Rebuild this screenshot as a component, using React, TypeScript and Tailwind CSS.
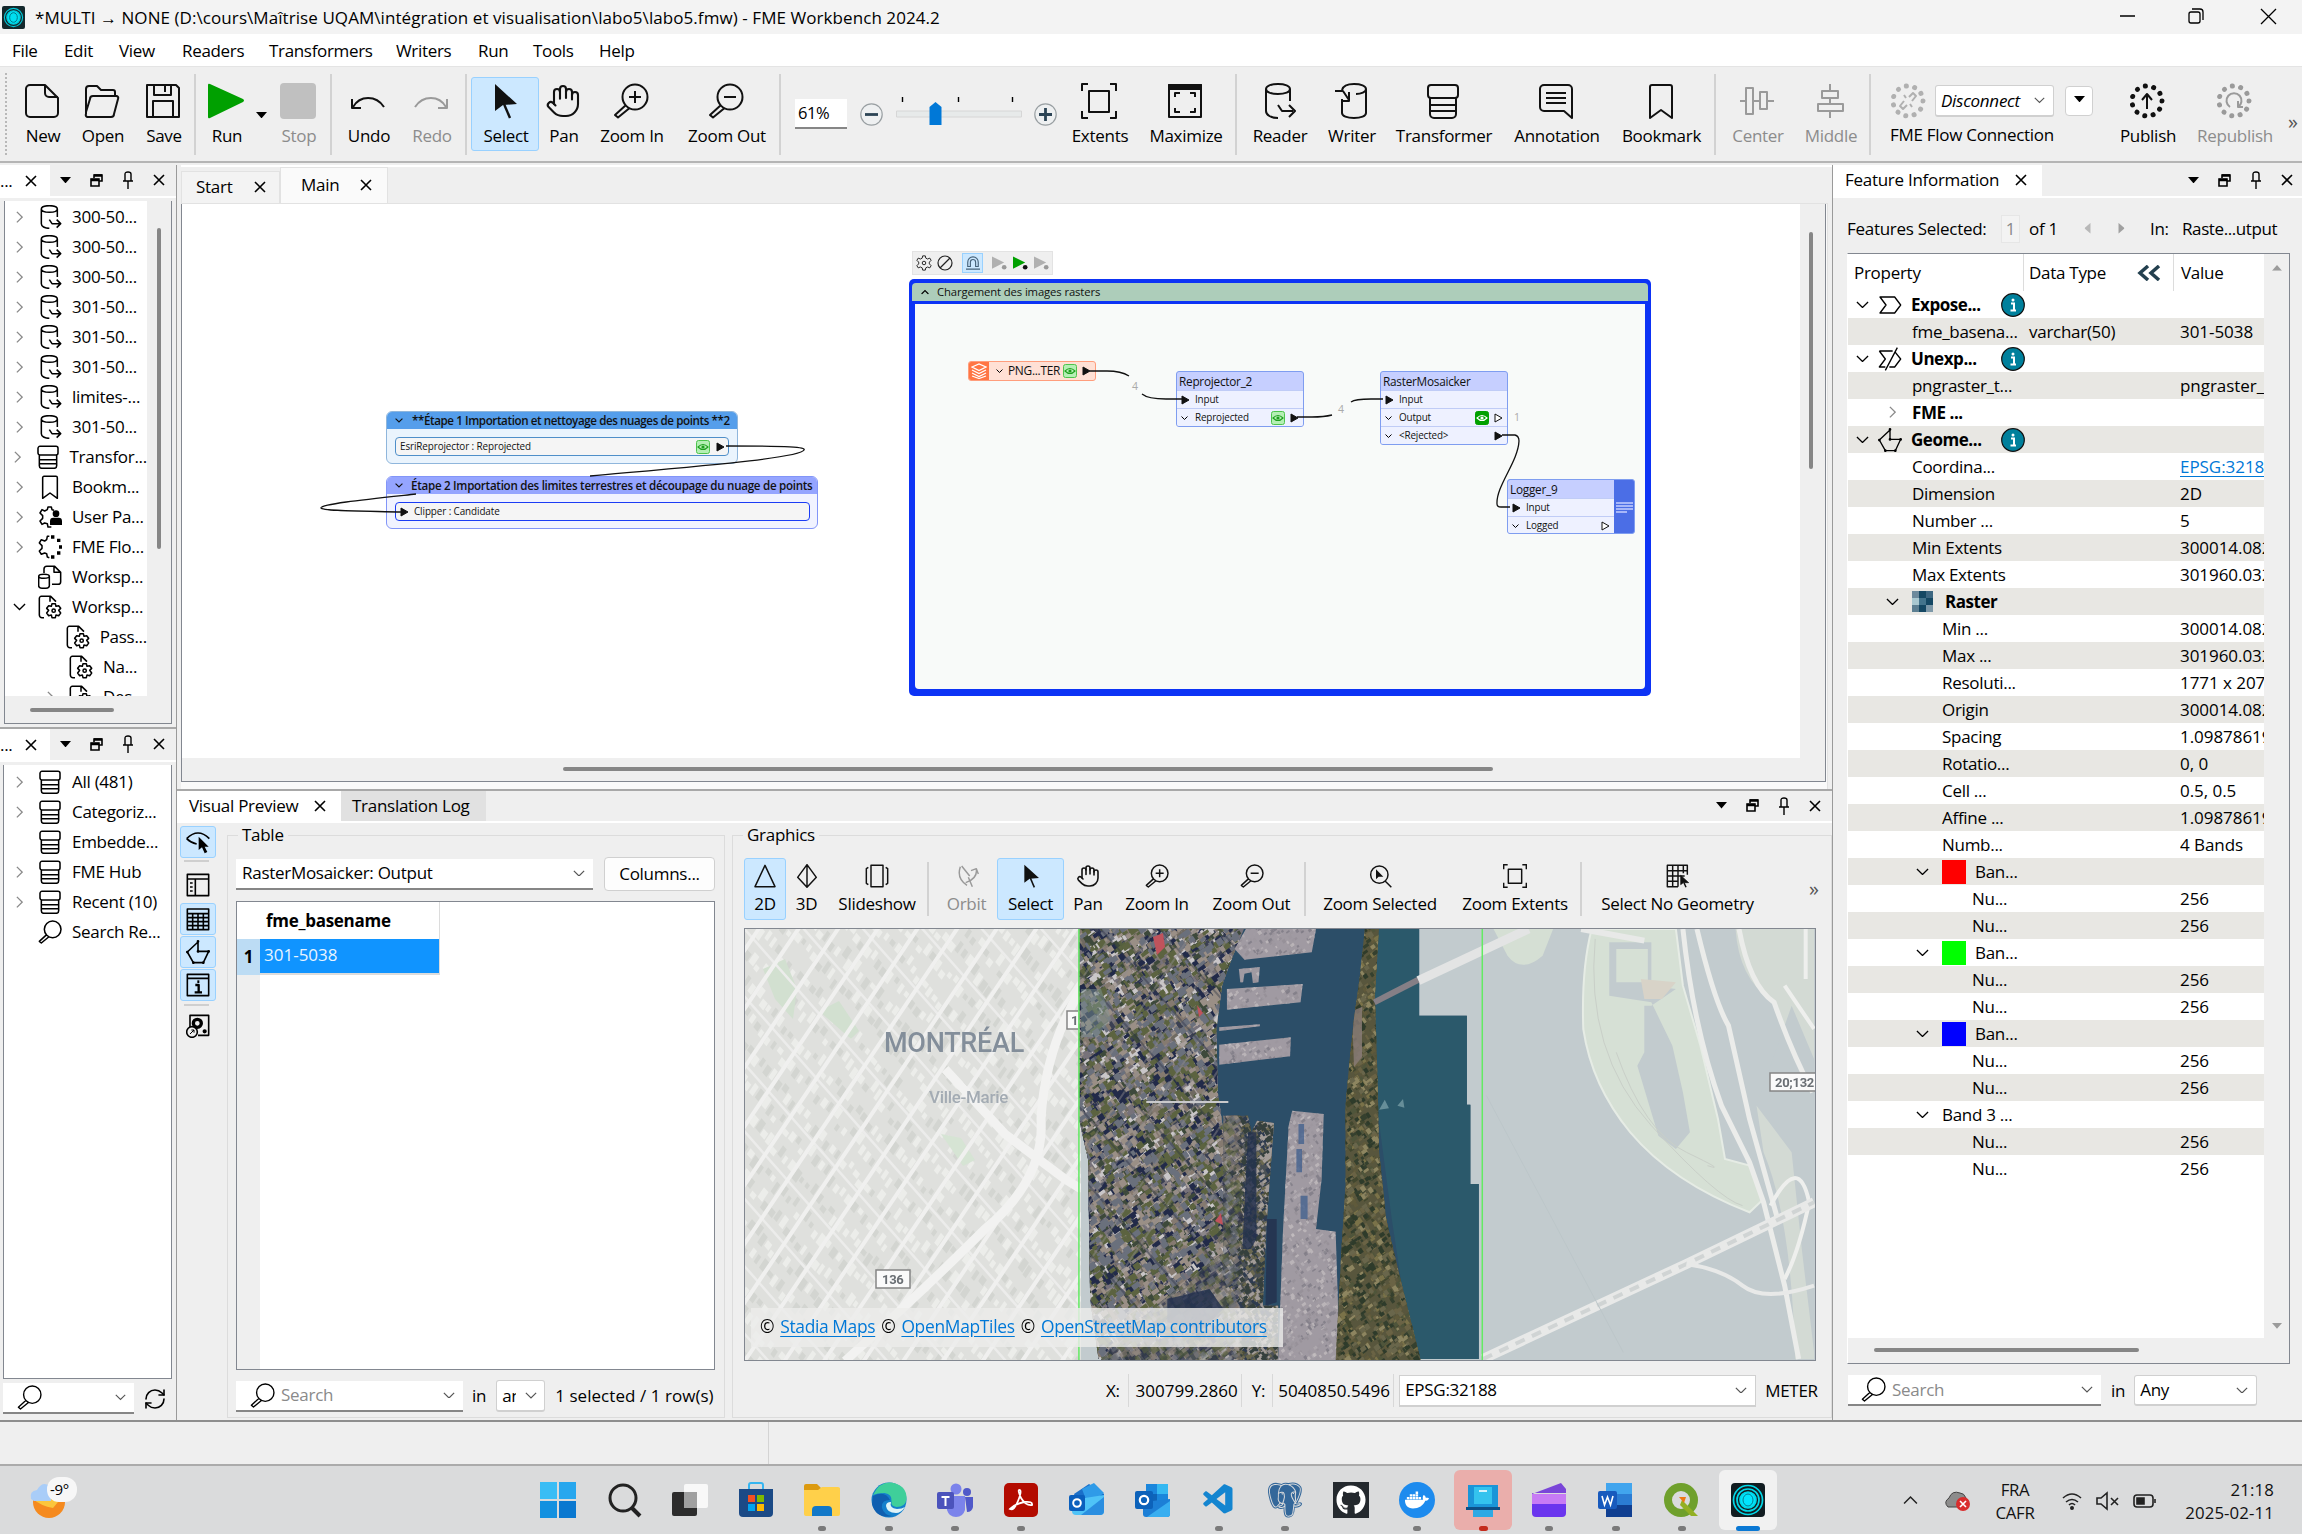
import React from "react";
import { Hand, RefreshCw } from "lucide-react";
import { FaGithub, FaDocker } from "react-icons/fa";
import { BiLogoPostgresql } from "react-icons/bi";
import { VscVscode } from "react-icons/vsc";

type P = { className?: string };

/* ---------- icon set, drawn on a 36 unit grid ---------- */
const art: Record<string, React.ReactNode> = {
  file: <path d="M21 2H6a4 4 0 0 0-4 4v24a4 4 0 0 0 4 4h24a4 4 0 0 0 4-4V15L21 2v8a4 4 0 0 0 4 4h9" />,
  open: <path d="M2 29V6a3 3 0 0 1 3-3h8l4 4h12a2 2 0 0 1 2 2v4M2 29l4-13a3 3 0 0 1 3-3h23a2 2 0 0 1 2 3l-4 15a3 3 0 0 1-3 3H4a2 2 0 0 1-2-3z" />,
  save: <path d="M2 2h29l3 3v29H2zM9 2v10h17V2M20 3v6M8 34V18h20v16" />,
  undo: <path d="M2 16v9h9M3 24C10 12 26 12 34 24" />,
  redo: <path d="M34 16v9h-9M33 24C26 12 10 12 2 24" />,
  select: (
    <>
      <path d="M8 1v27l8-6 14-1z" fill="currentColor" stroke="none" />
      <path d="M17 21l6 14" strokeWidth="2.4" />
    </>
  ),
  zoomin: <path d="M34.500 14a12.500 12.500 0 1 1-25 0 12.500 12.500 0 0 1 25 0zM16 14h12M22 8v12M13 22L2 32l3 2.500L16 25.500" />,
  zoomout: <path d="M34.500 14a12.500 12.500 0 1 1-25 0 12.500 12.500 0 0 1 25 0zM16 14h12M13 22L2 32l3 2.500L16 25.500" />,
  search: <path d="M34.500 14a12.500 12.500 0 1 1-25 0 12.500 12.500 0 0 1 25 0zM13 22L2 32l3 2.500L16 25.500" />,
  extents: <path d="M1 8V1h6M29 1h6v7M35 28v7h-6M7 35H1v-7M8 8h20v21H8z" />,
  maximize: (
    <>
      <path d="M2 2h32v32H2zM8 14V10h5M23 10h5v4M28 25v4h-5M13 29H8v-4" />
      <path d="M2 2h32v4H2z" fill="currentColor" />
    </>
  ),
  reader: <path d="M29 6c0 3-5 5-12 5S5 9 5 6s5-5 12-5 12 2 12 5zM5 6v22c0 4 5 7 12 7M29 6v12M17 22l4 6h11M28 22l6 6-6 6" />,
  writer: <path d="M9 7c1-4 6-6 12-6 7 0 12 2 12 5s-5 5-10 5M33 6v24c0 3-5 5-12 5S9 33 9 30V16M2 8h8l6 9M16 9v9H8" />,
  transformer: <path d="M6 2h24a3 3 0 0 1 3 3v7a3 3 0 0 1-3 3H6a3 3 0 0 1-3-3V5a3 3 0 0 1 3-3zM5 15v16a4 4 0 0 0 4 4h18a4 4 0 0 0 4-4V15M5 22h26M5 28h26" />,
  annotation: <path d="M6 2h24a4 4 0 0 1 4 4v29l-8-7H6a4 4 0 0 1-4-4V6a4 4 0 0 1 4-4zM8 10h20M8 15h20M8 20h20" />,
  bookmark: <path d="M9 2h18a2 2 0 0 1 2 2v31l-11-8-11 8V4a2 2 0 0 1 2-2z" />,
  center: <path d="M1 18h6M15 18h6M29 18h6M7 5h7v26H7zM21 9h7v17h-7z" />,
  middle: <path d="M18 1v7M18 15v6M18 28v7M10 8h16v7H10zM6 21h25v7H6z" />,
  publish: (
    <>
      <circle cx="18" cy="18" r="15" strokeWidth="5" strokeDasharray="0.1 8.46" strokeLinecap="round" />
      <path d="M18 26V12M13 17l5-6 5 6" />
    </>
  ),
  republish: (
    <>
      <circle cx="18" cy="18" r="15" strokeWidth="5" strokeDasharray="0.1 8.46" strokeLinecap="round" />
      <path d="M14 24a7.500 7.500 0 1 1 8 0M22 18v6h5" />
    </>
  ),
  link: (
    <>
      <circle cx="18" cy="18" r="15" strokeWidth="5" strokeDasharray="0.1 8.46" strokeLinecap="round" />
      <path d="M19 14l4-4 3 3-4 5M17 22l-4 4-3-3 4-5M14 12l2 3M20 21l2 3" />
    </>
  ),
  gear: (
    <>
      <path d="M15 2h6l1 5 4 2 5-2 3 5-4 4v4l4 4-3 5-5-2-4 2-1 5h-6l-1-5-4-2-5 2-3-5 4-4v-4l-4-4 3-5 5 2 4-2z" />
      <circle cx="18" cy="18" r="4" />
    </>
  ),
  filegear: (
    <>
      <path d="M9 34H6a4 4 0 0 1-4-4V5a3 3 0 0 1 3-3h14l8 8M18 2v8" />
      <path d="M21 13h5l1 4 4-1 3 4-3 3 3 4-3 4-4-1-1 4h-5l-1-4-4 1-3-4 3-4-3-3 3-4 4 1z" />
      <circle cx="23.500" cy="23.500" r="2.500" />
    </>
  ),
  usergear: (
    <>
      <path d="M20 33h-5l-1-5-4-1-4 2-3-5 4-4v-4l-4-4 3-5 4 2 4-2 1-4h5l1 4 3 1" />
      <circle cx="27" cy="13" r="5" fill="currentColor" stroke="none" />
      <path d="M18 30v-6q0-5 5-5h8q5 0 5 5v6z" fill="currentColor" stroke="none" />
    </>
  ),
  flow: (
    <>
      <path d="M17 34l-3-1-1-5-3-1-5 2-3-5 4-4v-4L2 12l3-5 5 2 3-2 1-5h3" />
      <path d="M22 3h.1M31 8h.1M34 18h.1M31 27h.1M22 33h.1" strokeWidth="5" strokeLinecap="square" />
    </>
  ),
  workres: <path d="M9 12V6a4 4 0 0 1 4-4h12l9 9v14a4 4 0 0 1-4 4h-9M24 2v9h10M17 17c0 2-3 3-8 3s-8-1-8-3 3-3 8-3 8 1 8 3zM1 17v14c0 2 3 4 8 4s8-2 8-4V17" />,
  geom: (
    <>
      <path d="M18 3v14h16l-8 17H11L2 18z" />
      <path d="M18 2v.1M34 17v.1M26 34v.1M11 34v.1M2 18v.1M18 17v.1" strokeWidth="4" strokeLinecap="round" />
    </>
  ),
  exposed: <path d="M3 6h22l9 12-9 12H3l9-12z" />,
  unexposed: <path d="M2 6h20M2 6l9 12L2 30h9M26 8l8 10-9 12h-8M29 1L11 35" />,
  two: <path d="M18 2L33 34H3z" />,
  three: <path d="M18 1L32 20 18 35 4 20zM18 1v34" />,
  slide: <path d="M9 2h18v32H9zM5 5l-3 2v22l3 2M31 5l3 2v22l-3 2" />,
  orbit: <path d="M8 4q-6 18 10 28M10 3l12 15M32 8q2 14-16 20M24 10l8-3 3 8M20 20l6 14" />,
  zoomsel: (
    <>
      <path d="M30 16a13 13 0 1 1-26 0 13 13 0 0 1 26 0zM26 26l9 9" />
      <path d="M12 8v15l4-4h7z" fill="currentColor" stroke="none" />
    </>
  ),
  nogeom: (
    <>
      <path d="M2 2h30v8H2zM2 10v24h16M2 18h26M2 26h16M10 2v32M18 2v32M26 2v12M32 10v6" />
      <path d="M22 17v14l4-3h8z" fill="currentColor" strokeWidth="1" />
      <path d="M27 28l3 7" />
    </>
  ),
  eye: (
    <>
      <path d="M1 13Q18-4 35 13M1 13q6 6 15 8" />
      <path d="M19 10v20l5-4 4 9 4-2-4-8h6z" fill="currentColor" stroke="none" />
    </>
  ),
  panel: <path d="M2 2h32v32H2zM2 9h32M14 9v25M6 15h4M6 21h4M6 27h4" />,
  grid: <path d="M2 3h32v31H2zM2 10h32M2 16h32M2 22h32M2 28h32M10 10v24M18 10v24M26 10v24" />,
  info: (
    <>
      <path d="M2 2h32v32H2zM2 8h32" />
      <path d="M14 18h5v11M13 29h11" strokeWidth="3.500" />
      <path d="M17 13h3" strokeWidth="4" />
    </>
  ),
  cog2: (
    <>
      <path d="M6 20V2h28v30H18" />
      <circle cx="17" cy="14" r="6" strokeWidth="5" />
      <circle cx="9" cy="27" r="8" />
      <path d="M6 30l6-6M8 24h4v4" strokeWidth="1.500" />
      <circle cx="28" cy="26" r="2" fill="currentColor" />
    </>
  ),
};

function Ic({ n, className = "size-9", sw = 2 }: { n: string; sw?: number } & P) {
  return (
    <svg viewBox="0 0 36 36" className={`shrink-0 ${className}`} fill="none" stroke="currentColor" strokeWidth={sw} strokeLinejoin="round">
      {art[n]}
    </svg>
  );
}
const Chev = ({ className = "w-3 text-[#444]", w = 1.4 }: P & { w?: number }) => (
  <svg viewBox="0 0 14 8" className={`shrink-0 ${className}`} fill="none" stroke="currentColor" strokeWidth={w}>
    <path d="M1 1l6 6 6-6" />
  </svg>
);
const ChevR = ({ className = "w-2 text-[#8a8a8a]" }: P) => (
  <svg viewBox="0 0 8 14" className={`shrink-0 ${className}`} fill="none" stroke="currentColor" strokeWidth="1.600">
    <path d="M1 1l6 6-6 6" />
  </svg>
);
const Tri = ({ className = "w-3" }: P) => (
  <svg viewBox="0 0 12 7" className={`shrink-0 ${className}`} fill="currentColor">
    <path d="M0 0h12L6 7z" />
  </svg>
);
const X = ({ className = "size-3" }: P) => (
  <svg viewBox="0 0 12 12" className={`shrink-0 ${className}`} fill="none" stroke="currentColor" strokeWidth="1.600">
    <path d="M1 1l10 10M11 1L1 11" />
  </svg>
);
const Sep = ({ className = "h-[81px]" }: P) => <div className={`w-0.5 shrink-0 bg-[#d2d2d2] ${className}`} />;

function DockButtons() {
  return (
    <div className="flex items-center pb-px text-black">
      <span className="flex w-[31px] justify-center"><Tri className="w-[11px]" /></span>
      <span className="flex w-[31px] justify-center">
        <svg viewBox="0 0 13 13" className="size-[13px]" fill="none" stroke="currentColor" strokeWidth="1.600">
          <path d="M4 4V1h8v6H9M1 5h8v7H1z" /><path d="M1 6h8M4 1.500h8" strokeWidth="2.500" />
        </svg>
      </span>
      <span className="flex w-8 justify-center">
        <svg viewBox="0 0 12 18" className="h-[18px] w-3" fill="none" stroke="currentColor" strokeWidth="1.400">
          <path d="M3 10V3q0-2 3-2t3 2v7M1 10h10M6 10v8" />
        </svg>
      </span>
      <span className="flex w-[30px] justify-center"><X /></span>
    </div>
  );
}

/* ---------- top tool bar ---------- */
function Tool({ n, label, w, off, on, children }: { n?: string; label: string; w: string; off?: boolean; on?: boolean; children?: React.ReactNode }) {
  return (
    <div className={`flex h-[74px] shrink-0 flex-col items-center pt-[5px] whitespace-nowrap ${w} ${off ? "text-[#9a9a9a]" : "text-[#111]"} ${on ? "rounded-[3px] border border-[#99d1ff] bg-[#cce8ff]" : "border border-transparent"}`}>
      {children ?? <Ic n={n!} />}
      <span className={`mt-[5px] ml-0.5 leading-6 ${off ? "text-[#8c8c8c]" : "text-black"}`}>{label}</span>
    </div>
  );
}

function RoundBtn({ plus }: { plus?: boolean }) {
  return (
    <svg viewBox="0 0 23 23" className="size-[23px] shrink-0" fill="#eef0f1" stroke="#9aa0a3" strokeWidth="1.200">
      <circle cx="11.500" cy="11.500" r="10.700" />
      <path d={plus ? "M5 11.500h13M11.500 5v13" : "M5 11.500h13"} stroke="#2c4455" strokeWidth="2.800" />
    </svg>
  );
}

function TopBar() {
  return (
    <div className="flex h-24 shrink-0 items-center border-b-2 border-[#b5b5b5] bg-[#efefef] pl-[5px]">
      <div className="mr-[5px] h-[82px] w-0.5 border-l-2 border-dotted border-[#b8b8b8]" />
      <Tool n="file" label="New" w="w-[60px]" />
      <Tool n="open" label="Open" w="w-[60px]" />
      <Tool n="save" label="Save" w="w-[62px]" />
      <Sep />
      <Tool label="Run" w="w-[60px]">
        <svg viewBox="0 0 36 36" className="size-9"><path d="M0 2q0-2 2-1l33 15q2 1.500 0 3L2 35q-2 1-2-1z" fill="#00a000" /></svg>
      </Tool>
      <div className="w-[10px]"><Tri className="mt-0.5 w-[11px]" /></div>
      <Tool label="Stop" w="w-16" off><div className="size-9 rounded bg-[#c0c0c0]" /></Tool>
      <Sep />
      <Tool n="undo" label="Undo" w="w-[72px]" />
      <Tool n="redo" label="Redo" w="w-[54px]" off />
      <Sep className="mr-1 ml-[7px] h-[81px]" />
      <Tool n="select" label="Select" w="w-[68px]" on />
      <Tool label="Pan" w="w-12"><Hand className="size-9" strokeWidth={1.4} /></Tool>
      <Tool n="zoomin" label="Zoom In" w="w-[88px]" />
      <Tool n="zoomout" label="Zoom Out" w="w-[102px]" />
      <Sep className="mr-3.5 ml-0.5 h-[81px]" />
      <div className="mr-[13px] flex h-[30px] w-[52px] items-center border-b-2 border-[#868686] bg-white pl-[3px] text-[16.500px] tracking-tight">61%</div>
      <RoundBtn />
      <svg viewBox="0 0 126 34" className="mx-3 h-[34px] w-[127px] shrink-0">
        <path d="M1 14h125v6H1z" fill="#e7eaea" stroke="#d6d6d6" />
        <path d="M7 0v5M63 0v5M117 0v5" stroke="#000" strokeWidth="1.400" />
        <path d="M34 10l6-5 6 5v18H34z" fill="#0078d7" />
      </svg>
      <RoundBtn plus />
      <Tool n="extents" label="Extents" w="w-[84px]" />
      <Tool n="maximize" label="Maximize" w="w-[88px]" />
      <Sep className="ml-1.5 h-[81px]" />
      <Tool n="reader" label="Reader" w="w-[84px]" />
      <Tool n="writer" label="Writer" w="w-[60px]" />
      <Tool n="transformer" label="Transformer" w="w-[124px]" />
      <Tool n="annotation" label="Annotation" w="w-[102px]" />
      <Tool n="bookmark" label="Bookmark" w="w-[107px]" />
      <Sep />
      <Tool n="center" label="Center" w="w-[82px]" off />
      <Tool n="middle" label="Middle" w="w-16" off />
      <Sep className="mr-[19px] ml-[7px] h-[81px]" />
      <div className="flex h-[74px] w-[203px] shrink-0 flex-col pt-1.5">
        <div className="flex items-center">
          <Ic n="link" className="size-9 text-[#b0b0b0]" />
          <div className="ml-[9px] flex h-8 w-[119px] items-center justify-between rounded-[3px] border border-b-2 border-[#d0d0d0] bg-white pr-2 pl-[5px] italic">
            Disconnect<Chev className="w-[11px] text-[#555]" />
          </div>
          <div className="ml-[11px] flex h-[30px] w-[28px] items-center justify-center rounded border border-[#d0d0d0] bg-white pb-1"><Tri className="w-[11px]" /></div>
        </div>
        <span className="mt-1 leading-6 whitespace-nowrap">FME Flow Connection</span>
      </div>
      <div className="w-3" />
      <Tool n="publish" label="Publish" w="w-[84px]" />
      <Tool n="republish" label="Republish" w="w-[90px]" off />
      <span className="mt-4 ml-[9px] text-[20px] text-[#555]">»</span>
    </div>
  );
}

/* ---------- left docks ---------- */
function DockHead() {
  return (
    <div className="flex h-[33px] shrink-0 items-center border-b-2 border-white bg-[#efefef]">
      <div className="flex h-full w-[50px] items-center justify-between bg-white pr-[13px]">...<X /></div>
      <DockButtons />
    </div>
  );
}
function TreeRow({ icon, label, arrow, indent }: { icon: string; label: string; arrow?: "r" | "d"; indent?: boolean }) {
  return (
    <div className={`flex h-[30px] shrink-0 items-center whitespace-nowrap ${indent ? "pl-[38px]" : "pl-[7px]"}`}>
      <span className="flex w-[14px] justify-center">
        {arrow === "r" && <ChevR className="w-[7px] text-[#8a8a8a]" />}
        {arrow === "d" && <Chev className="w-[13px] text-black" />}
      </span>
      <Ic n={icon} className="mr-2.5 ml-[12px] size-6" sw={2.3} />
      {label}
    </div>
  );
}
function LeftDocks() {
  return (
    <div className="flex w-[177px] shrink-0 flex-col border-r border-[#9a9a9a]">
      <DockHead />
      <div className="mt-[3px] ml-1 flex h-[523px] w-[168px] flex-col border border-t-0 border-[#828790] bg-[#efefef]">
        <div className="flex h-[495px]">
          <div className="flex w-[142px] flex-col overflow-hidden bg-white pt-px">
            {["300-50...", "300-50...", "300-50...", "301-50...", "301-50...", "301-50...", "limites-...", "301-50..."].map((t, i) => (
              <TreeRow key={i} icon="reader" label={t} arrow="r" />
            ))}
            <TreeRow icon="transformer" label="Transfor..." arrow="r" />
            <TreeRow icon="bookmark" label="Bookm..." arrow="r" />
            <TreeRow icon="usergear" label="User Pa..." arrow="r" />
            <TreeRow icon="flow" label="FME Flo..." arrow="r" />
            <TreeRow icon="workres" label="Worksp..." />
            <TreeRow icon="filegear" label="Worksp..." arrow="d" />
            <TreeRow icon="filegear" label="Pass..." indent />
            <TreeRow icon="filegear" label="Na..." indent />
            <TreeRow icon="filegear" label="Des..." indent arrow="r" />
          </div>
          <div className="mt-[27px] ml-[10px] h-[321px] w-1 rounded bg-[#868686]" />
        </div>
        <div className="mt-3 ml-[25px] h-1 w-[84px] rounded bg-[#868686]" />
      </div>
      <div className="mt-[3px] border-t-2 border-[#a8a8a8]" />
      <DockHead />
      <div className="mt-[3px] ml-[3px] h-[614px] w-[169px] border border-t-0 border-[#828790] bg-white pt-[2px] pl-px">
        <TreeRow icon="transformer" label="All (481)" arrow="r" />
        <TreeRow icon="transformer" label="Categoriz..." arrow="r" />
        <TreeRow icon="transformer" label="Embedde..." />
        <TreeRow icon="transformer" label="FME Hub" arrow="r" />
        <TreeRow icon="transformer" label="Recent (10)" arrow="r" />
        <TreeRow icon="search" label="Search Re..." />
      </div>
      <div className="mt-1 ml-[3px] flex items-center">
        <div className="flex h-[31px] w-[131px] items-center justify-between border-b-2 border-[#868686] bg-white pr-2 pl-[14px]">
          <Ic n="search" className="size-[25px]" />
          <Chev className="w-[11px] text-[#555]" />
        </div>
        <RefreshCw className="ml-[9px] size-6" strokeWidth={1.6} />
      </div>
    </div>
  );
}

/* ---------- workspace canvas ---------- */
const EyeBadge = ({ className = "", solid }: P & { solid?: boolean }) => (
  <svg viewBox="0 0 14 14" className={`size-[14px] shrink-0 ${className}`}>
    <rect x=".5" y=".5" width="13" height="13" rx="2" fill={solid ? "#00a000" : "#b4efb4"} stroke={solid ? "#00a000" : "#4cc44c"} />
    <path d="M2 7q5-5 10 0-5 5-10 0z" fill="none" stroke={solid ? "#fff" : "#1fa01f"} strokeWidth="1.100" />
    <circle cx="7" cy="7" r="1.600" fill={solid ? "#fff" : "#1fa01f"} />
  </svg>
);
const Port = ({ open, className = "" }: P & { open?: boolean }) => (
  <svg viewBox="0 0 9 10" className={`h-[10px] w-[9px] shrink-0 ${className}`}>
    <path d="M1 1l7 4-7 4z" fill={open ? "#fff" : "#111"} stroke="#111" strokeWidth="1" />
  </svg>
);
function NodeRow({ label, input, eye, out }: { label: string; input?: boolean; eye?: "soft" | "solid"; out?: "fill" | "open" }) {
  return (
    <div className="flex h-[18px] items-center border-t border-[#c0ccf6] bg-[#eef1ff] pr-[4px] pl-[4px] text-[9.900px] tracking-[-0.15px]">
      {input ? <Port className="mr-[5px]" /> : <Chev className="mr-[7px] w-[7px] text-black" w={2} />}
      <span className="flex-1">{label}</span>
      {eye && <EyeBadge solid={eye === "solid"} className="mr-[5px]" />}
      {out && <Port open={out === "open"} />}
    </div>
  );
}
function Node({ title, className, children }: { title: string; className: string; children: React.ReactNode }) {
  return (
    <div className={`absolute w-[128px] overflow-hidden rounded-[3px] border border-[#7f9df0] bg-[#c6cfff] ${className}`}>
      <div className="h-[18px] pl-[2px] text-[11.800px] leading-[19px] tracking-[-0.25px] whitespace-nowrap">{title}</div>
      {children}
    </div>
  );
}
function Workspace() {
  return (
    <div className="relative h-[554px] w-[1618px] overflow-hidden bg-white text-[#111]">
      <div className="absolute -top-[204px] -left-[182px] h-[800px] w-[1900px]">
        <div className="absolute top-[411px] left-[386px] h-[53px] w-[352px] overflow-hidden rounded-md border border-[#8fb6dc] bg-[#eaf4fd]">
          <div className="flex h-[17px] items-center bg-[#559eeb] pl-2 text-[11.600px] font-semibold tracking-[-0.4px] whitespace-nowrap">
            <Chev className="mr-[9px] w-[8px]" w={2} />**Étape 1 Importation et nettoyage des nuages de points **2
          </div>
          <div className="mt-2 ml-[8px] flex h-[19px] w-[334px] items-center rounded border border-[#4f8fc9] bg-[#f5f5f5] pr-[3px] pl-1 text-[9.900px] tracking-[-0.1px]">
            <span className="flex-1">EsriReprojector : Reprojected</span><EyeBadge className="mr-[6px]" /><Port />
          </div>
        </div>
        <div className="absolute top-[476px] left-[386px] h-[53px] w-[432px] overflow-hidden rounded-md border border-[#8295f8] bg-[#f1f3ff]">
          <div className="flex h-[17px] items-center bg-[#95a5ff] pl-2 text-[11.600px] font-semibold tracking-[-0.28px] whitespace-nowrap">
            <Chev className="mr-[8px] w-[8px]" w={2} />Étape 2 Importation des limites terrestres et découpage du nuage de points
          </div>
          <div className="mt-2 ml-[8px] flex h-[19px] w-[415px] items-center rounded border border-[#1b3cf5] bg-[#f5f5f5] pl-1 text-[9.900px] tracking-[-0.1px]">
            <Port className="mr-[5px]" />Clipper : Candidate
          </div>
        </div>

        <div className="absolute top-[251px] left-[912px] flex h-6 w-[141px] items-center border border-[#e3e3e3] bg-[#efefef] pl-[3px]">
          <Ic n="gear" className="size-4" />
          <svg viewBox="0 0 16 16" className="ml-[5px] size-4" fill="none" stroke="#222" strokeWidth="1.200"><circle cx="8" cy="8" r="7" /><path d="M3 13L13 3" /></svg>
          <div className="ml-[9px] flex h-[20px] w-[21px] items-center justify-center border border-[#99d1ff] bg-[#cce8ff]">
            <svg viewBox="0 0 16 16" className="size-[14px]" fill="none" stroke="#45627a" strokeWidth="1.300"><path d="M0 15h16M2 12V7a6 6 0 0 1 12 0v5h-3V7a3 3 0 0 0-6 0v5z" /></svg>
          </div>
          <div className="w-[3px]" />
          {["#b0b0b0", "#00a000", "#b0b0b0"].map((c, i) => (
            <svg key={i} viewBox="0 0 16 14" className="ml-[6px] h-[14px] w-[15px]">
              <path d="M0 0l13 6.500L0 13z" fill={c} /><circle cx="13" cy="11.500" r="2.500" fill={i === 1 ? "#111" : "#999"} />
            </svg>
          ))}
        </div>

        <div className="absolute top-[279px] left-[909px] h-[417px] w-[742px] rounded-[5px] bg-[#0d33f5] px-[3px] pt-1">
          <div className="flex h-[18px] items-center rounded-t bg-[#adcdba] pl-[9px] text-[11.300px] tracking-[-0.12px]">
            <Chev className="mr-[8px] w-[8px] rotate-180 text-black" w={2} />Chargement des images rasters
          </div>
          <div className="mx-[3px] mt-[3px] h-[385px] rounded-b bg-[#f8faf9]" />
        </div>

        <div className="absolute top-[361px] left-[968px] flex h-5 w-[128px] items-center overflow-hidden rounded-[3px] border border-[#ff9d7c] bg-[#ffe0d5] pr-[3px] text-[11.900px] font-medium">
          <div className="flex h-full w-5 items-center justify-center bg-[#ff7644]">
            <svg viewBox="0 0 16 16" className="size-4" fill="none" stroke="#fff" strokeWidth="1.200"><path d="M1 4l7-3 7 3-7 3.500zM1 7l7 3.500L15 7M1 10l7 3.500L15 10M1 13l7 2.500 7-2.500" /></svg>
          </div>
          <Chev className="mr-[5px] ml-[7px] w-[7px] text-black" w={2} />
          <span className="w-[55px] whitespace-nowrap">PNG...TER</span><EyeBadge className="mr-[5px]" /><Port />
        </div>
        <Node title="Reprojector_2" className="top-[371px] left-[1176px]">
          <NodeRow label="Input" input />
          <NodeRow label="Reprojected" eye="soft" out="fill" />
        </Node>
        <Node title="RasterMosaicker" className="top-[371px] left-[1380px]">
          <NodeRow label="Input" input />
          <NodeRow label="Output" eye="solid" out="open" />
          <NodeRow label="<Rejected>" out="fill" />
        </Node>
        <div className="absolute top-[479px] left-[1507px] flex h-[55px] w-[128px] overflow-hidden rounded-[3px] border border-[#7f9df0] bg-[#4b6ee6]">
          <div className="w-[106px] bg-[#c6cfff]">
            <div className="h-[18px] pl-[2px] text-[11.800px] leading-[19px] tracking-[-0.25px]">Logger_9</div>
            <NodeRow label="Input" input />
            <NodeRow label="Logged" out="open" />
          </div>
          <div className="mt-[22px] ml-[2px] h-3 w-[17px]">
            <svg viewBox="0 0 17 12" className="h-3 w-[17px]" stroke="#c6cfff" strokeWidth="1.400"><path d="M0 1h17M0 4h17M0 7h17M0 10h11" /></svg>
          </div>
        </div>
        <span className="absolute top-[379px] left-[1132px] text-[10.500px] text-[#aaa]">4</span>
        <span className="absolute top-[402px] left-[1338px] text-[10.500px] text-[#aaa]">4</span>
        <span className="absolute top-[410px] left-[1514px] text-[10.500px] text-[#aaa]">1</span>
        <svg className="absolute inset-0 size-full" fill="none" stroke="#111" strokeWidth="1.300">
          <path d="M726 446C790 446 806 447 804 450C800 458 700 466 590 476M416 494C370 499 320 504 321 508C322 511 360 511 402 512" />
          <path d="M1090 371h17q14 0 22 5M1142 394q6 5 24 5h18M1297 417h15q12 0 20-2M1351 402q4-3 20-3h12M1502 435h13q4 1 4 6C1518 462 1496 486 1497 504q0 3 4 3h9" />
        </svg>
      </div>
    </div>
  );
}
function CanvasDock() {
  return (
    <div className="flex h-[624px] shrink-0 flex-col pl-1">
      <div className="flex h-[38px] items-end border-t-2 border-white">
        <div className="flex h-8 w-[99px] items-center justify-between border border-b-0 border-[#e2e2e2] bg-[#f3f3f3] pr-[13px] pb-0.5 pl-[14px]">Start<X /></div>
        <div className="flex h-[36px] w-[108px] items-center justify-between border border-b-0 border-[#e2e2e2] bg-[#fafafa] pr-[15px] pb-0.5 pl-[20px]">Main<X /></div>
      </div>
      <div className="mr-1 flex-1 border-t border-r border-[#e2e2e2] bg-[#fafafa]">
        <div className="flex h-[578px] w-[1645px] flex-col border border-t-0 border-[#828790] bg-[#efefef]">
          <div className="flex">
            <Workspace />
            <div className="mt-7 ml-[9px] h-[237px] w-1 rounded bg-[#868686]" />
          </div>
          <div className="mt-[9px] ml-[381px] h-1 w-[930px] rounded bg-[#868686]" />
        </div>
      </div>
    </div>
  );
}

/* ---------- map ---------- */
function rng(seed: number) {
  let s = seed;
  return () => ((s = (s * 1664525 + 1013904223) >>> 0) / 4294967296);
}
const pt = (x: number, y: number) => `${x.toFixed(1)} ${y.toFixed(1)}`;
function buildStreets() {
  const r = rng(7);
  const blocks: string[] = [];
  const white: string[] = [];
  const ux = [0.56, -0.83];
  const vx = [0.66, 0.75];
  const at = (a: number, b: number) => [a * ux[0] + b * vx[0], 200 + a * ux[1] + b * vx[1]];
  for (let i = -14; i < 34; i++)
    for (let j = -14; j < 34; j++) {
      const a0 = (i - 8) * 23, b0 = (j - 6) * 34;
      const [cx, cy] = at(a0, b0);
      if (cx < -30 || cx > 370 || cy < -40 || cy > 470) continue;
      for (let k = 0; k < 4; k++) {
        const a = a0 + r() * 10, b = b0 + k * 8, w = 5 + r() * 7, h = 4 + r() * 3;
        const p = [at(a, b), at(a + w, b), at(a + w, b + h), at(a, b + h)];
        (r() < 0.45 ? blocks : white).push("M" + p.map((q) => pt(q[0], q[1])).join("L") + "z");
      }
    }
  const line = (f: boolean, n: number, step: number) => {
    let d = "";
    for (let i = -n; i < n; i++) {
      const p = f ? [at(-700, i * step - 2), at(900, i * step - 2)] : [at(i * step - 2, -700), at(i * step - 2, 900)];
      d += `M${pt(p[0][0], p[0][1])}L${pt(p[1][0], p[1][1])}`;
    }
    return d;
  };
  return { blocks: blocks.join(""), white: white.join(""), a: line(true, 24, 34), b: line(false, 30, 46) };
}
const streets = buildStreets();

function buildTexture(seed: number, colors: string[], size: number, count: number, x: number, y: number, w: number, h: number) {
  const r = rng(seed);
  const out = colors.map(() => "");
  for (let i = 0; i < count; i++) {
    const c = Math.floor(r() * colors.length);
    const px = x + r() * w, py = y + r() * h, s = size * (0.5 + r()), t = size * (0.5 + r() * 0.9);
    out[c] += `M${pt(px, py)}l${pt(s * 0.75, -s * 0.55)}l${pt(t * 0.5, t * 0.75)}l${pt(-s * 0.75, s * 0.55)}z`;
  }
  return colors.map((c, i) => ({ c, d: out[i] }));
}
const city = buildTexture(3, ["#2b3150", "#3a4152", "#8c8789", "#a9a09c", "#6f6b62", "#56603f", "#c9c6c8", "#3e4a3a", "#857a70", "#232c4a", "#9a8f86", "#5b6440", "#6b6f7c"], 6, 7500, 330, -5, 160, 445);
const strip = buildTexture(11, ["#42472f", "#5f5a3a", "#7a7248", "#35402f", "#50543a", "#6b6344", "#8d8560", "#2f3a2c", "#69664c"], 4.5, 3000, 585, -5, 110, 445);
const sprinkle = buildTexture(19, ["#8f8b92", "#bdb8bb", "#a39da4", "#6f6e78", "#cfcacb", "#9b959c"], 3.2, 3400, 470, -5, 140, 445);
const yard = buildTexture(23, ["#4f5138", "#8f8a8a", "#2d3a50", "#6b6850", "#a39c98", "#353f3e"], 4.2, 2400, 480, 180, 60, 260);

function MapView() {
  const ns = { vectorEffect: "non-scaling-stroke" as const };
  const toPx = "scale(0.7015 0.3333) translate(-8 -30)";
  return (
    <div className="relative h-[433px] w-[1072px] overflow-hidden border border-[#828790] bg-[#c2cbce]">
      <svg viewBox="0 0 1071 432" className="absolute top-0 left-0 h-[432px] w-[1071px]">
        <defs>
          <clipPath id="city"><path transform={toPx} d="M484 0H725L700 130 688 200 680 330 682 520 690 640 700 700 690 1000 700 1320H512L500 1140 497 720 484 600z" /></clipPath>
          <clipPath id="strip"><path transform={toPx} d="M892 20H912L906 230 910 500 912 700 922 900 940 1060 972 1330H850L858 1000 864 800 864 560 870 420 876 300 884 180z" /></clipPath>
          <clipPath id="piers">
            <path transform={toPx} d="M722 30H822L816 100 720 122 706 90zM695 210L803 195 800 250 695 272zM712 150L742 144 740 190 732 192 730 160 720 164 718 190 714 190zM684 325L742 316 742 322 684 336zM684 377L786 355 785 412 684 437zM788 575L833 585 830 780 822 930 850 938 856 1330H768L775 930 783 620z" />
          </clipPath>
          <clipPath id="yard"><path transform={toPx} d="M690 590L725 590 730 640 738 605 762 612 752 900 746 1160H768V1330H512L600 1150 690 1000z" /></clipPath>
          <clipPath id="left"><path d="M0 0h336v432H0z" /></clipPath>
          <filter id="soft"><feGaussianBlur stdDeviation="0.700" /></filter>
        </defs>

        <g clipPath="url(#left)">
          <path d="M0 0h336v432H0z" fill="#dfe0dd" />
          <path d={streets.blocks} fill="#d3d5d1" />
          <path d={streets.white} fill="#ecedea" />
          <path d="M18 40l22-10 12 30-4 30-18-20zM74 82l20-10 20 30-8 8z" fill="#d2e0d0" />
          <path d="M196 205l20 4 14 22-12 6z" fill="#d6e4d4" />
          <path d={streets.b} stroke="#ececeb" strokeWidth="2.500" />
          <path d={streets.a} stroke="#f0f0ef" strokeWidth="4" />
          <path d="M200 140l60 65 60 45 16 10M336 60Q300 120 296 190 300 250 240 300 180 360 100 432" fill="none" stroke="#f2f2f1" strokeWidth="9" />
        </g>

        <g transform={toPx}>
          <path d="M1075 30L1160 30 1145 110Q1115 165 1095 110z" fill="#d5dfd4" />
          <path d="M1215 30H1335L1345 200 1370 380 1395 600 1405 720 1440 740 1460 840 1440 880Q1330 790 1270 640 1215 500 1203 330 1200 150 1215 30z" fill="#d6e0d5" stroke="#e6ece5" strokeWidth="2" {...ns} />
          <path d="M1240 70H1300V200L1335 210 1300 260H1290V400L1280 440 1310 650 1335 690 1355 640 1345 520 1330 380 1300 250 1240 230z" fill="#c2cbce" />
          <path d="M1250 90h45v100h-45z" fill="#d6e0d5" />
          <path d="M1285 180l50 10-20 50h-25z" fill="#d8d3c8" />
          <path d="M1220 60Q1205 400 1300 620T1430 860M1250 400Q1290 640 1350 700T1380 740" fill="none" stroke="#c9cfc8" strokeWidth="1" {...ns} />
          <path d="M1420 30H1532V1320H1505Q1500 900 1460 700L1450 560Q1530 520 1470 240 1425 180 1420 30z" fill="#d3dad4" />
          <path d="M1500 260L1532 420V1300L1515 1000 1500 700 1450 560z" fill="#c2cbce" />
          <path d="M1345 30Q1360 330 1400 560L1440 730 1460 850 1490 1100 1510 1320M1425 30Q1440 200 1475 250 1500 400 1530 520M1365 30Q1390 250 1410 320L1440 600 1480 900" fill="none" stroke="#ebecea" strokeWidth="5" {...ns} />
          <path d="M1490 200L1532 330M1520 30V180M1470 860Q1510 700 1525 850 1510 1000 1490 1080" fill="none" stroke="#eeefed" strokeWidth="4" {...ns} />
          <path d="M1060 1320L1350 1035 1532 850" stroke="#e8e9e8" strokeWidth="10" fill="none" {...ns} />
          <path d="M1060 1320L1350 1035 1532 850" stroke="#d0d4d4" strokeWidth="4" strokeDasharray="10 8" fill="none" {...ns} />
          <path d="M1350 1035Q1400 1050 1430 1100T1532 1100" stroke="#e8e9e8" strokeWidth="4" fill="none" {...ns} />
          <path d="M1200 30L1290 65" stroke="#e8e9e8" strokeWidth="6" {...ns} />
          <path d="M1065 530L1260 1300" stroke="#bcc6c9" strokeWidth="1" {...ns} />
        </g>

        <path transform={toPx} d="M484 30H969V290H1037V557H1042V795H1054V1320H512L500 1140 497 720 484 600z" fill="#2c4e68" />
        <path transform={toPx} d="M905 30H969V290H1037V557H1042V795H1054V1320H960L930 900 905 500z" fill="#2b596b" />
        <g filter="url(#soft)">
          <path transform={toPx} d="M912 572l8-30 6 26zM938 560l8-20 2 26z" fill="#8fb3b8" opacity=".6" />
          <g clipPath="url(#city)">
            <path d="M330 0h200v432H330z" fill="#77727a" />
            {city.map((p) => <path key={p.c} d={p.d} fill={p.c} />)}
            <path d={streets.a} stroke="#8f8c8c" strokeWidth="2" opacity=".45" />
            <path d={streets.b} stroke="#2c3345" strokeWidth="2" opacity=".4" />
            <path d="M408 8l10-4 2 14-8 8zM452 76l6 8-4 4zM470 292l6-8 2 12z" fill="#c0525c" />
            <path d="M336 60l20 0 10 30-14 18-16 0z" fill="#7d928f" opacity=".5" />
          </g>
          <g clipPath="url(#yard)">
            <path d="M340 150h240v282H340z" fill="#4b5156" />
            {yard.map((p) => <path key={p.c} d={p.d} fill={p.c} />)}
            {city.map((p) => <path key={p.c} d={p.d} fill={p.c} opacity=".6" />)}
          </g>
          <g clipPath="url(#piers)">
            <path d="M460 0h160v432H460z" fill="#a09aa2" />
            {sprinkle.map((p) => <path key={p.c} d={p.d} fill={p.c} opacity=".55" />)}
          </g>
          <path transform={toPx} d="M797 615h8v60h-8zM794 690h8v70h-8zM800 830h10v70h-10z" fill="#45618f" opacity=".8" />
          <path transform={toPx} d="M725 640h12v320l-8 30h-12zM752 900h14v250l-16 10zM610 1140l60-30 20 60-30 60-50-20z" fill="#26324f" opacity=".85" />
          <g clipPath="url(#strip)">
            <path d="M580 0h110v432H580z" fill="#58563c" />
            {strip.map((p) => <path key={p.c} d={p.d} fill={p.c} />)}
            <path d="M607 82l10-4v50l-8 10z" fill="#8a7c78" opacity=".8" />
          </g>
        </g>
        <g transform={toPx} fill="none">
          <path d="M905 250L970 180" stroke="#857f86" strokeWidth="6" {...ns} />
          <path d="M968 185L1125 30" stroke="#e3e4e4" strokeWidth="9" {...ns} />
          <path d="M580 549h117" stroke="#c9c9cb" strokeWidth="2" {...ns} />
          <path d="M484 0V1330M1059 0V1330" stroke="#63ea63" strokeWidth="1.500" {...ns} />
        </g>

        <g fontFamily="Roboto, sans-serif" fill="#8d97a1">
          <text x="139" y="123" fontSize="28" fontWeight="500" textLength="140" lengthAdjust="spacingAndGlyphs" fill="#838e9a">MONTRÉAL</text>
          <text x="184" y="174" fontSize="16.500" fontWeight="500" textLength="79" lengthAdjust="spacingAndGlyphs" fill="#a3abb3">Ville-Marie</text>
        </g>
        <g fill="#fafafa" stroke="#858585" strokeWidth="1.500">
          <path d="M131 341h34v18h-34zM333 82h-11v18h11M1071 144h-46v18h46" />
        </g>
        <g fontFamily="Roboto, sans-serif" fontSize="13" fontWeight="700" fill="#6a6f74">
          <text x="137" y="355">136</text>
          <text x="326" y="96">1</text>
          <text x="1030" y="158">20;132</text>
        </g>
      </svg>
      <div className="absolute bottom-[13px] left-[6px] flex h-[39px] w-[532px] items-center gap-1.5 bg-[#ececeb]/80 pb-0.5 pl-[9px] text-[17.400px] tracking-[-0.300px] whitespace-nowrap [word-spacing:-0.5px]">
        © <span className="text-[#0078d7] underline underline-offset-[3px]">Stadia Maps</span> © <span className="text-[#0078d7] underline underline-offset-[3px]">OpenMapTiles</span> ©{" "}
        <span className="text-[#0078d7] underline underline-offset-[3px]">OpenStreetMap contributors</span>
      </div>
    </div>
  );
}

/* ---------- visual preview ---------- */
function GTool({ n, label, w, off, on, children }: { n?: string; label: string; w: string; off?: boolean; on?: boolean; children?: React.ReactNode }) {
  return (
    <div className={`flex h-[62px] shrink-0 flex-col items-center pt-[5px] whitespace-nowrap ${w} ${off ? "text-[#9a9a9a]" : "text-[#111]"} ${on ? "rounded-[3px] border border-[#99d1ff] bg-[#cce8ff]" : "border border-transparent"}`}>
      {children ?? <Ic n={n!} className="size-6" sw={2.2} />}
      <span className={`mt-1 leading-6 ${off ? "text-[#8c8c8c]" : "text-black"}`}>{label}</span>
    </div>
  );
}
function SideBtn({ n, on }: { n: string; on?: boolean }) {
  return (
    <div className={`flex h-8 w-9 items-center justify-center ${on ? "rounded-[3px] border border-[#99d1ff] bg-[#cce8ff]" : ""}`}>
      <Ic n={n} className="size-6" sw={2.4} />
    </div>
  );
}
function Preview() {
  return (
    <div className="flex flex-1 flex-col border-t-2 border-[#a8a8a8]">
      <div className="flex h-[32px] shrink-0 items-center border-b-2 border-white">
        <div className="flex h-full w-[164px] items-center justify-between bg-white pr-[15px] pb-px pl-[12px]">Visual Preview<X /></div>
        <div className="flex h-full w-[145px] items-center bg-[#e1e1e1] pb-px pl-[11px]">Translation Log</div>
        <div className="flex-1" />
        <DockButtons />
        <div className="w-0.5" />
      </div>
      <div className="flex flex-1">
        <div className="flex w-[50px] shrink-0 flex-col items-start pt-[3px] pl-[3px]">
          <SideBtn n="eye" on />
          <div className="mt-0.5 ml-1 h-0.5 w-[25px] bg-[#cfcfcf]" />
          <div className="h-[7px]" />
          <SideBtn n="panel" />
          <div className="mt-0.5 flex flex-col gap-px"><SideBtn n="grid" on /><SideBtn n="geom" on /><SideBtn n="info" on /></div>
          <div className="mt-[3px] ml-1 h-0.5 w-[25px] bg-[#cfcfcf]" />
          <div className="h-[4px]" />
          <SideBtn n="cog2" />
        </div>

        <fieldset className="mb-[3px] h-[595px] w-[498px] shrink-0 border border-[#dcdcdc] px-2">
          <legend className="ml-0.5 px-1 leading-6">Table</legend>
          <div className="mt-[10px] flex items-center">
            <div className="flex h-[31px] w-[357px] items-center justify-between border-b-2 border-[#868686] bg-white pr-2 pl-1.5">
              RasterMosaicker: Output<Chev className="w-[12px] text-[#555]" />
            </div>
            <div className="ml-[11px] flex h-[34px] w-[111px] items-center justify-center rounded border border-[#d0d0d0] bg-[#fdfdfd]">Columns...</div>
          </div>
          <div className="mt-2.5 h-[469px] w-[479px] border border-[#828790] bg-white">
            <div className="flex h-full">
              <div className="flex w-[23px] flex-col">
                <div className="h-[37px]" />
                <div className="flex h-9 items-center justify-center bg-[#bcdcf4] font-bold">1</div>
                <div className="flex-1 bg-[#efefef]" />
              </div>
              <div className="w-[180px]">
                <div className="flex h-[37px] items-center border-r border-[#dcdcdc] pl-1.5 font-bold">fme_basename</div>
                <div className="flex h-9 items-center border-r border-b-2 border-[#dcdcdc] bg-[#1094ff] pb-0.5 pl-1 tracking-normal text-[#e8f4ff]">301-5038</div>
              </div>
            </div>
          </div>
          <div className="mt-2.5 flex items-center">
            <div className="flex h-[31px] w-[227px] items-center border-b-2 border-[#868686] bg-white pr-2 pl-[14px] text-[#8a8a8a]">
              <Ic n="search" className="mr-1.5 size-[25px] text-black" />Search<span className="flex-1" /><Chev className="w-[12px] text-[#555]" />
            </div>
            <span className="ml-[9px]">in</span>
            <div className="ml-[10px] flex h-8 w-[49px] items-center justify-between rounded-[3px] border border-b-2 border-[#d0d0d0] bg-white pr-[7px] pl-[5px]">
              <span className="w-3.5 overflow-hidden">an</span><Chev className="w-[12px] text-[#555]" />
            </div>
            <span className="ml-2.5 tracking-[0.05px] whitespace-nowrap">1 selected / 1 row(s)</span>
          </div>
        </fieldset>

        <fieldset className="mb-[3px] ml-[7px] h-[595px] w-[1100px] shrink-0 border border-[#dcdcdc] pl-[11px]">
          <legend className="-ml-px px-1 leading-6">Graphics</legend>
          <div className="mt-[11px] flex items-center">
            <GTool n="two" label="2D" w="w-[42px]" on />
            <GTool n="three" label="3D" w="w-[41px]" />
            <GTool n="slide" label="Slideshow" w="w-[100px]" />
            <Sep className="h-[54px]" />
            <div className="w-[7px]" />
            <GTool n="orbit" label="Orbit" w="w-[61px]" off />
            <GTool n="select" label="Select" w="w-[67px]" on />
            <GTool label="Pan" w="w-12"><Hand className="size-6" strokeWidth={1.6} /></GTool>
            <GTool n="zoomin" label="Zoom In" w="w-[90px]" />
            <GTool n="zoomout" label="Zoom Out" w="w-[99px]" />
            <Sep className="ml-[3px] h-[54px]" />
            <GTool n="zoomsel" label="Zoom Selected" w="w-[148px]" />
            <GTool n="extents" label="Zoom Extents" w="w-[122px]" />
            <Sep className="ml-1 h-[54px]" />
            <GTool n="nogeom" label="Select No Geometry" w="w-[191px]" />
            <span className="ml-9 text-[20px] text-[#555]">»</span>
          </div>
          <div className="mt-2"><MapView /></div>
          <div className="mt-[13px] flex h-[33px] items-center pl-[362px] whitespace-nowrap">
            X:<div className="ml-2 flex h-[33px] w-[114px] items-center justify-end border-x border-[#d8d8d8] pr-[3px] tracking-[0.05px]">300799.2860</div>
            <span className="ml-2.5">Y:</span><div className="ml-[7px] flex h-[33px] w-[122px] items-center justify-end border-x border-[#d8d8d8] pr-[3px] tracking-[0.05px]">5040850.5496</div>
            <div className="ml-[5px] flex h-8 w-[357px] items-center justify-between border border-b-2 border-[#d0d0d0] bg-white pr-2 pl-[5px]">EPSG:32188<Chev className="w-[12px] text-[#555]" /></div>
            <span className="ml-[9px]">METER</span>
          </div>
        </fieldset>
      </div>
    </div>
  );
}

/* ---------- feature information ---------- */
type Row = { l: number; t: string; v?: string; ty?: string; b?: boolean; a?: "d" | "r"; ic?: string; info?: boolean; sw?: string; link?: boolean };
const nu: Row = { l: 3, t: "Nu...", v: "256" };
const rows: Row[] = [
  { l: 0, t: "Expose...", b: true, a: "d", ic: "exposed", info: true },
  { l: 1, t: "fme_basena...", ty: "varchar(50)", v: "301-5038" },
  { l: 0, t: "Unexp...", b: true, a: "d", ic: "unexposed", info: true },
  { l: 1, t: "pngraster_t...", v: "pngraster_" },
  { l: 1, t: "FME ...", b: true, a: "r" },
  { l: 0, t: "Geome...", b: true, a: "d", ic: "geom", info: true },
  { l: 1, t: "Coordina...", v: "EPSG:3218", link: true },
  { l: 1, t: "Dimension", v: "2D" },
  { l: 1, t: "Number ...", v: "5" },
  { l: 1, t: "Min Extents", v: "300014.0820" },
  { l: 1, t: "Max Extents", v: "301960.0320" },
  { l: 1, t: "Raster", b: true, a: "d", ic: "raster" },
  { l: 2, t: "Min ...", v: "300014.0820" },
  { l: 2, t: "Max ...", v: "301960.0320" },
  { l: 2, t: "Resoluti...", v: "1771 x 207" },
  { l: 2, t: "Origin", v: "300014.0820" },
  { l: 2, t: "Spacing", v: "1.098786190" },
  { l: 2, t: "Rotatio...", v: "0, 0" },
  { l: 2, t: "Cell ...", v: "0.5, 0.5" },
  { l: 2, t: "Affine ...", v: "1.098786190" },
  { l: 2, t: "Numb...", v: "4 Bands" },
  { l: 2, t: "Ban...", a: "d", sw: "bg-[#ff0000]" }, nu, nu,
  { l: 2, t: "Ban...", a: "d", sw: "bg-[#00ff00]" }, nu, nu,
  { l: 2, t: "Ban...", a: "d", sw: "bg-[#0000ff]" }, nu, nu,
  { l: 2, t: "Band 3 ...", a: "d" }, nu, nu,
];
const levelPad = ["pl-[7px]", "pl-[37px]", "pl-[67px]", "pl-[97px]"];
function PropRow({ r, odd }: { r: Row; odd: boolean }) {
  return (
    <div className={`flex h-[27px] items-center whitespace-nowrap ${odd ? "bg-[#e8e7e3]" : "bg-white"}`}>
      <div className={`flex w-[181px] shrink-0 items-center ${levelPad[r.l]}`}>
        <span className="flex w-[15px] shrink-0 justify-center">
          {r.a === "d" && <Chev className="w-[13px] text-black" />}
          {r.a === "r" && <ChevR className="w-[7px] text-[#8a8a8a]" />}
        </span>
        <span className={r.l === 0 ? "w-2" : "w-3"} />
        {r.ic === "raster" ? (
          <svg viewBox="0 0 3 3" className="mr-[12px] size-[21px]" shapeRendering="crispEdges">
            {["#6d8a9c", "#154863", "#3d6781", "#a9c8d0", "#44748c", "#154863", "#5c7f92", "#154863", "#7d98a8"].map((c, i) => (
              <rect key={i} x={i % 3} y={Math.floor(i / 3)} width="1" height="1" fill={c} />
            ))}
          </svg>
        ) : r.ic ? (
          <Ic n={r.ic} className="mr-[9px] size-6" />
        ) : null}
        {r.sw && <span className={`mr-[9px] h-6 w-6 shrink-0 ${r.sw}`} />}
        <span className={r.b ? "font-bold tracking-[-0.45px]" : ""}>{r.t}</span>
        {r.info && (
          <svg viewBox="0 0 24 24" className="mr-[4px] ml-auto size-6 shrink-0">
            <circle cx="12" cy="12" r="11.300" fill="#00809c" stroke="#111" strokeWidth="1.200" />
            <path d="M10 10.500h3V17M9.500 17.500h5.500" stroke="#fff" strokeWidth="2" fill="none" /><circle cx="12" cy="7" r="1.500" fill="#fff" />
          </svg>
        )}
      </div>
      <div className="w-[151px] shrink-0">{r.ty}</div>
      <div className={`w-[84px] overflow-hidden tracking-[-0.05px] ${r.link ? "text-[#0078d7] underline underline-offset-[3px]" : ""}`}>{r.v}</div>
    </div>
  );
}
function FeatureInfo() {
  return (
    <div className="flex w-[470px] shrink-0 flex-col border-l border-[#9a9a9a]">
      <div className="flex h-[33px] shrink-0 items-center border-b-2 border-white">
        <div className="flex h-full w-[209px] items-center justify-between bg-white pr-[15px] pb-px pl-3">Feature Information<X /></div>
        <div className="flex-1" />
        <DockButtons />
      </div>
      <div className="flex h-[55px] items-center pt-[6px] pl-3.5 whitespace-nowrap">
        <span className="w-[154px]">Features Selected:</span>
        <span className="flex h-7 w-[19px] items-center justify-center border border-[#e6e6e6] bg-[#f3f3f3] text-[#8a8a8a]">1</span>
        <span className="ml-[9px] w-[53px]">of 1</span>
        <Tri className="w-[11px] rotate-90 text-[#b8b8b8]" />
        <Tri className="ml-[23px] w-[11px] -rotate-90 text-[#a0a0a0]" />
        <span className="ml-[23px] w-[32px]">In:</span><span className="tracking-[-0.4px]">Raste...utput</span>
      </div>
      <div className="ml-3.5 flex h-[1111px] w-[443px] flex-col border border-[#828790] border-l-white bg-[#efefef]">
        <div className="flex h-[1084px]">
          <div className="w-[416px] overflow-hidden bg-white">
            <div className="flex h-[37px] items-center">
              <div className="flex h-full w-[176px] items-center border-r border-[#dcdcdc] pl-[6px]">Property</div>
              <div className="flex h-full w-[150px] items-center justify-between border-r border-[#dcdcdc] pr-3 pl-[5px]">
                Data Type
                <svg viewBox="0 0 24 16" className="h-4 w-6" fill="none" stroke="#24404f" strokeWidth="3.500"><path d="M11 1L3 8l8 7M22 1l-8 7 8 7" /></svg>
              </div>
              <span className="pl-[7px]">Value</span>
            </div>
            {rows.map((r, i) => <PropRow key={i} r={r} odd={i % 2 === 1} />)}
          </div>
          <div className="flex flex-1 flex-col items-center justify-between pt-[11px] pb-[9px] text-[#9b9b9b]">
            <Tri className="w-[10px] rotate-180" /><Tri className="w-[10px]" />
          </div>
        </div>
        <div className="mt-[10px] ml-[26px] h-1 w-[265px] rounded bg-[#868686]" />
      </div>
      <div className="mt-[11px] ml-[15px] flex items-center">
        <div className="flex h-[31px] w-[253px] items-center border-b-2 border-[#868686] bg-white pr-2 pl-[13px] text-[#8a8a8a]">
          <Ic n="search" className="mr-1.5 size-[25px] text-black" />Search<span className="flex-1" /><Chev className="w-[12px] text-[#555]" />
        </div>
        <span className="ml-[10px]">in</span>
        <div className="ml-[9px] flex h-[31px] w-[123px] items-center justify-between rounded-[3px] border border-b-2 border-[#d0d0d0] bg-white pr-2 pl-[5px]">Any<Chev className="w-[12px] text-[#555]" /></div>
      </div>
    </div>
  );
}

/* ---------- taskbar ---------- */
const S = ({ children }: { children: React.ReactNode }) => <svg viewBox="0 0 36 36" className="size-9">{children}</svg>;
const OutlookNew = () => (
  <S>
    <path d="M5 12L20 2l15 10v8L10 26z" fill="#1a6fc9" /><path d="M13 7l12-6 10 10-16 12z" fill="#2f9be8" />
    <path d="M3 18l32-5v16a4 4 0 0 1-4 4H7a4 4 0 0 1-4-4z" fill="#4fc3f7" /><path d="M12 33l23-18v14a4 4 0 0 1-4 4z" fill="#2a8ee0" />
    <rect x="0" y="13" width="16" height="16" rx="2" fill="#0a5fbd" />
    <circle cx="8" cy="21" r="3.800" fill="none" stroke="#fff" strokeWidth="2" />
  </S>
);
const OutlookOld = () => (
  <S>
    <path d="M11 2h22v20H11z" fill="#1a86dc" /><path d="M22 2h11v10H22z" fill="#35b8f1" /><path d="M11 12h11v10H11z" fill="#0f64b8" />
    <path d="M8 20l27-3v15a3 3 0 0 1-3 3H11a3 3 0 0 1-3-3z" fill="#1c7fd6" /><path d="M12 35l23-16v13a3 3 0 0 1-3 3z" fill="#38aef0" />
    <rect x="0" y="9" width="18" height="18" rx="2" fill="#0c62ba" />
    <circle cx="9" cy="18" r="4.200" fill="none" stroke="#fff" strokeWidth="2.200" />
  </S>
);
const apps: { el: React.ReactNode; dot?: string; box?: string }[] = [
  { el: <S><path d="M0 0h17v17H0z" fill="#39bdf5" /><path d="M19 0h17v17H19z" fill="#27a7ee" /><path d="M0 19h17v17H0z" fill="#1391e0" /><path d="M19 19h17v17H19z" fill="#0a78d0" /></S> },
  { el: <S><g fill="none" stroke="#222"><circle cx="17" cy="16" r="13" strokeWidth="3" /><path d="M26 26l8 8" strokeWidth="4" /></g></S> },
  { el: <S><rect x="12" y="2" width="24" height="24" rx="2" fill="#f8f8f8" /><rect x="0" y="10" width="25" height="24" rx="2" fill="#2c2c2c" /><path d="M12 10h13v16H12z" fill="#a0a0a0" /></S> },
  { el: <S><path d="M11 7V3a2 2 0 0 1 2-2h10a2 2 0 0 1 2 2v4" fill="none" stroke="#35b5f0" strokeWidth="2" /><path d="M1 7h34v24a4 4 0 0 1-4 4H5a4 4 0 0 1-4-4z" fill="#1b4a86" /><path d="M10 13h7v7h-7z" fill="#f25022" /><path d="M19 13h7v7h-7z" fill="#7fba00" /><path d="M10 22h7v7h-7z" fill="#00a4ef" /><path d="M19 22h7v7h-7z" fill="#ffb900" /></S> },
  { el: <S><path d="M0 4q0-2 2-2h11l4 4h17q2 0 2 2v4H0z" fill="#dc9a10" /><path d="M0 8h14l4-3h16q2 0 2 2v25q0 2-2 2H2q-2 0-2-2z" fill="#ffd04a" /><path d="M8 34v-6q0-4 4-4h12q4 0 4 4v6z" fill="#1278c8" /></S>, dot: "#777" },
  { el: <S><circle cx="18" cy="18" r="17.500" fill="#1580cc" /><path d="M2 13Q8 0 20 .6 36 3 35.500 17q-1 8-10 8-6-1-5-5 1-8-7-9Q6 11 2 13z" fill="#3fcf9a" /><path d="M2 14q12-6 17 4 -9 0-8 8 2 7 10 8Q5 37 1 22z" fill="#0f5fb0" /><path d="M20 20q-2 6 6 7 5 0 8-2-4 6-9 6-9 0-10-7 0-4 5-4z" fill="#dff3f8" /></S>, dot: "#777" },
  { el: <S><circle cx="19" cy="7" r="5.500" fill="#7b83eb" /><circle cx="30" cy="10" r="4" fill="#5059c9" /><path d="M10 14h18v14q-2 7-9 7t-9-7z" fill="#7b83eb" /><path d="M28 15h8v10q-1 5-6 5z" fill="#5059c9" /><rect x="0" y="10" width="17" height="17" rx="2" fill="#4b53bc" /><path d="M4.500 15h8M8.500 15v9" stroke="#fff" strokeWidth="2" /></S>, dot: "#777" },
  { el: <S><rect width="34" height="34" x="1" y="1" rx="5" fill="#b30b00" /><path d="M7 27q4 2 8-8 4-10 2-11-3-1 1 8 5 8 11 7 1-4-8-3-9 2-14 7z" fill="none" stroke="#fff" strokeWidth="1.800" /></S>, dot: "#777" },
  { el: <OutlookNew /> },
  { el: <OutlookOld /> },
  { el: <VscVscode className="size-9 text-[#1385d0]" />, dot: "#777" },
  { el: <BiLogoPostgresql className="size-[42px] text-[#33679a]" />, dot: "#777" },
  { el: <div className="flex size-9 items-center justify-center bg-[#24292e]"><FaGithub className="size-[30px] text-white" /></div> },
  { el: <div className="flex size-9 items-center justify-center rounded-full bg-[#1d8bee]"><FaDocker className="size-6 text-white" /></div>, dot: "#777" },
  { el: <S><path d="M3 3h30v22H3z" fill="#1b95d8" /><path d="M1 25h34v3H1z" fill="#0e4f86" /><path d="M8 28h20v7H8z" fill="#2ea9e4" /><path d="M9 5h18v17H9z" fill="#34c3ee" /><path d="M14 9h8" stroke="#d6f3fc" strokeWidth="2" /></S>, dot: "#c42b1c", box: "bg-[#eaaeab]" },
  { el: <S><path d="M1 12L30 1l5 6v4H1z" fill="#7a46d8" /><path d="M1 12h34v11H1z" fill="#c77bf5" /><path d="M1 22h34v9q0 4-4 4H5q-4 0-4-4z" fill="#6a35ee" /></S>, dot: "#777" },
  { el: <S><path d="M8 1h26v11H8z" fill="#41a5ee" /><path d="M8 12h26v11H8z" fill="#2b7cd3" /><path d="M8 23h26v12H8z" fill="#103f91" /><rect x="0" y="9" width="19" height="18" rx="2" fill="#185abd" /><path d="M4 14l2.500 9L9.500 15l3 8L15 14" fill="none" stroke="#fff" strokeWidth="1.600" /></S>, dot: "#777" },
  { el: <S><circle cx="17" cy="18" r="13" fill="none" stroke="#6fa02c" strokeWidth="8" /><path d="M18 18l16 16h-7L16 23z" fill="#93b023" /><path d="M15 15h7l-2 6z" fill="#ee7913" /></S>, dot: "#777" },
  { el: <S><rect width="34" height="34" x="1" y="1" rx="4" fill="#111c20" /><g fill="none" stroke="#00d8e8" strokeWidth="1.700"><circle cx="18" cy="18" r="14.500" /><circle cx="18" cy="18" r="11" /><circle cx="18" cy="18" r="8" fill="#00e5ff" /></g><ellipse cx="18" cy="18" rx="5" ry="6" fill="none" stroke="#087d8c" /></S>, dot: "blue", box: "bg-[#f1f1f1]" },
];
function Taskbar() {
  return (
    <div className="flex h-[70px] shrink-0 items-center border-t-2 border-[#ababab] bg-[#dadbdc]">
      <div className="flex w-[525px] items-center pl-[29px]">
        <svg viewBox="0 0 50 46" className="mb-1 h-[46px] w-[50px]">
          <circle cx="20" cy="27" r="16" fill="#f58a1f" /><path d="M4 24a16 16 0 0 1 30-3l-10 12q-12-2-20-9z" fill="#fbc63c" /><path d="M2 24q-2-8 6-9 6-10 14-3v14H5z" fill="#a9cdf8" />
          <rect x="18" y="2" width="30" height="25" rx="12" fill="#f7f7f7" /><text x="21" y="20" fontSize="15" fontFamily="Open Sans, sans-serif">-9°</text>
        </svg>
      </div>
      <div className="flex w-[1256px] items-center">
        {apps.map((a, i) => (
          <div key={i} className="relative flex h-[60px] w-[66.100px] shrink-0 items-center justify-center">
            <div className={`flex h-[60px] w-[58px] items-center justify-center rounded-md ${a.box ?? ""}`}>{a.el}</div>
            {a.dot && <div className={`absolute -bottom-px h-[5px] rounded-full ${a.dot === "blue" ? "w-6 bg-[#0a78d4]" : a.dot === "#777" ? "w-[8px] bg-[#7a7a7a]" : "w-[9px] bg-[#c42b1c]"}`} />}
          </div>
        ))}
      </div>
      <div className="ml-[122px] flex items-center pt-px text-[16.800px] leading-[23px] tracking-[-0.3px] text-[#111]">
        <Chev className="w-[15px] rotate-180 text-[#222]" />
        <svg viewBox="0 0 26 22" className="ml-[27px] h-[22px] w-[26px]"><path d="M3 17q-5-5 1-9 3-8 11-5 4 0 6 5v9z" fill="#8c8c8c" stroke="#444" /><circle cx="18" cy="14" r="7" fill="#d92c2c" /><path d="M15 11l6 6M21 11l-6 6" stroke="#fff" strokeWidth="1.600" /></svg>
        <div className="ml-[21px] w-[46px] text-center">FRA<br />CAFR</div>
        <svg viewBox="0 0 96 22" className="ml-[23px] h-[22px] w-[96px]" fill="none" stroke="#222" strokeWidth="1.600">
          <path d="M2 8q9-8 18 0M5 12q6-5 12 0M8 15q3-3 6 0" /><circle cx="11" cy="18" r="1.200" fill="#222" />
          <path d="M36 8h4l6-5v16l-6-5h-4zM50 8l7 7M57 8l-7 7" /><rect x="73" y="5" width="19" height="12" rx="3" /><path d="M94 9v4" /><path d="M76 8h7v6h-7z" fill="#222" />
        </svg>
        <div className="ml-[19px] w-[98px] text-right tracking-[0.12px] whitespace-nowrap">21:18<br />2025-02-11</div>
      </div>
    </div>
  );
}

export default function App() {
  return (
    <div className="flex h-[1534px] w-[2302px] flex-col overflow-hidden bg-[#efefef] font-['Open_Sans',sans-serif] text-[17px] tracking-[-0.28px] text-black">
      <div className="flex h-[34px] shrink-0 items-center bg-[#f3f3f3]">
        <svg viewBox="0 0 24 24" className="ml-[2px] size-[23px]"><rect width="24" height="24" rx="2" fill="#14282c" /><g fill="none" stroke="#00c8d8" strokeWidth="1.200"><circle cx="12" cy="12" r="9.500" /><circle cx="12" cy="12" r="7" fill="#00dff0" /></g><ellipse cx="12" cy="12" rx="4" ry="5" fill="none" stroke="#078" /></svg>
        <span className="mt-px ml-[10px] tracking-[0.07px]">*MULTI → NONE (D:\cours\Maîtrise UQAM\intégration et visualisation\labo5\labo5.fmw) - FME Workbench 2024.2</span>
        <div className="flex-1" />
        <svg viewBox="0 0 180 20" className="mr-6 h-5 w-[180px]" fill="none" stroke="#000" strokeWidth="1.300">
          <path d="M13 9h15M162 2l15 15M177 2l-15 15" transform="translate(9 0)" className="hidden" />
          <path d="M22 9h15M163 2l15 15M178 2l-15 15" /><rect x="91" y="5" width="11" height="11" rx="2" /><path d="M94 2h8q3 0 3 3v8" />
        </svg>
      </div>
      <div className="flex h-[33px] shrink-0 items-center border-b border-[#e4e4e4] bg-white pt-0.5 tracking-[-0.33px]">
        {[["File", "ml-3 w-[52px]"], ["Edit", "w-[55px]"], ["View", "w-[63px]"], ["Readers", "w-[87px]"], ["Transformers", "w-[127px]"], ["Writers", "w-[82px]"], ["Run", "w-[55px]"], ["Tools", "w-[66px]"], ["Help", ""]].map(([t, c]) => (
          <span key={t} className={c}>{t}</span>
        ))}
      </div>
      <TopBar />
      <div className="mt-0.5 flex h-[1255px] shrink-0">
        <LeftDocks />
        <div className="flex w-[1655px] shrink-0 flex-col">
          <CanvasDock />
          <Preview />
        </div>
        <FeatureInfo />
      </div>
      <div className="flex h-11 shrink-0 border-t-2 border-[#8e8e8e]"><div className="w-[769px] border-r border-[#d4d4d4]" /></div>
      <Taskbar />
    </div>
  );
}
